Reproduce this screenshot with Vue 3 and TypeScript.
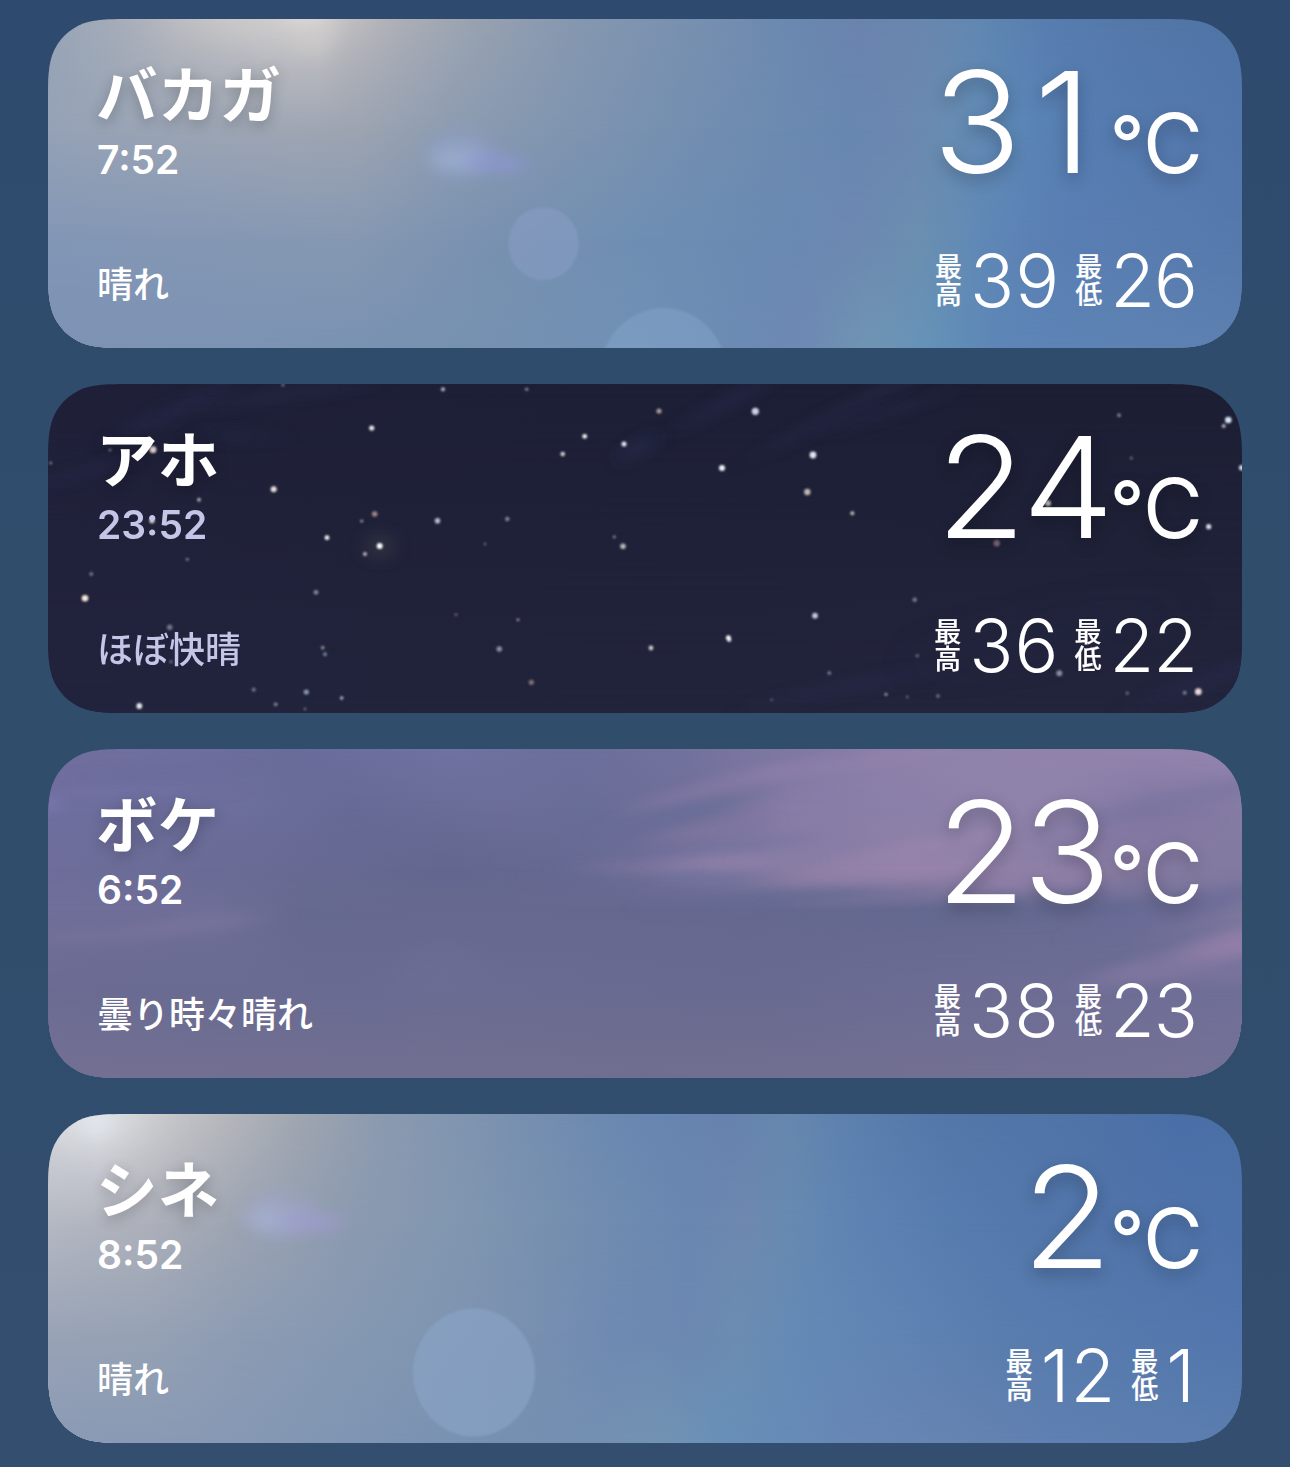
<script setup lang="ts">
interface Band {
  y: number
  stops: [number, string][]
}
interface Blob {
  cx: number
  cy: number
  rx: number
  ry: number
  rot?: number
  fill: string
  o: number
  blur: 'xs' | 's' | 'm' | 'c'
}
interface Place {
  id: string
  name: string
  time: string
  condition: string
  temp: string
  high: string
  low: string
  dim?: boolean
  bands: Band[]
  blobs: Blob[]
  stars?: boolean
}

const W = 1194
const H = 329

// Continuous-curvature rounded rectangle
function roundedShape(w: number, h: number, r: number): string {
  const a = 1.528665 * r
  const b = 1.088493 * r
  const c = 0.868407 * r
  const d = 0.631494 * r
  const e = 0.074911 * r
  const f = 0.372824 * r
  const g = 0.16906 * r
  return [
    `M${a} 0H${w - a}`,
    `C${w - b} 0 ${w - c} 0 ${w - d} ${e}`,
    `C${w - f} ${g} ${w - g} ${f} ${w - e} ${d}`,
    `C${w} ${c} ${w} ${b} ${w} ${a}`,
    `V${h - a}`,
    `C${w} ${h - b} ${w} ${h - c} ${w - e} ${h - d}`,
    `C${w - g} ${h - f} ${w - f} ${h - g} ${w - d} ${h - e}`,
    `C${w - c} ${h} ${w - b} ${h} ${w - a} ${h}`,
    `H${a}`,
    `C${b} ${h} ${c} ${h} ${d} ${h - e}`,
    `C${f} ${h - g} ${g} ${h - f} ${e} ${h - d}`,
    `C0 ${h - c} 0 ${h - b} 0 ${h - a}`,
    `V${a}`,
    `C0 ${b} 0 ${c} ${e} ${d}`,
    `C${g} ${f} ${f} ${g} ${d} ${e}`,
    `C${c} 0 ${b} 0 ${a} 0Z`,
  ].join('')
}
const shape = roundedShape(W, H, 57)

// x, y, radius, opacity, colour
const stars: [number, number, number, number, string][] = [
  [2.7, 79, 1.6, 0.4, '#fff'], [62, 66, 1.6, 0.4, '#fff'], [105, 65.7, 3.4, 0.95, '#f4e4df'],
  [151, 115.7, 2, 0.7, '#e4e4f0'], [225.7, 105.3, 3, 0.95, '#f3ece6'], [323.7, 44, 2.6, 0.95, '#f2f2f8'],
  [235, 1, 1.6, 0.4, '#fff'], [326.7, 130, 2.8, 0.75, '#c9a59d'], [313.7, 137, 1.6, 0.6, '#e4e4f0'],
  [389.5, 136.7, 2.8, 0.8, '#dfe3f2'], [279, 153.7, 2.4, 0.95, '#fff'], [331.7, 162, 3, 1, '#fff'],
  [317, 170, 2, 0.8, '#e8dcd8'], [139.3, 175.3, 1.6, 0.4, '#fff'], [43.3, 190, 1.9, 0.5, '#bcd0dc'],
  [37, 214.3, 3.3, 0.98, '#fbeedd'], [268, 208.3, 2.4, 0.6, '#c3cbe0'], [121.7, 243.3, 2.8, 0.6, '#9fb0bd'],
  [123, 277.7, 1.5, 0.4, '#fff'], [274.7, 263.7, 1.9, 0.6, '#d8c8c8'], [277, 270.3, 2, 0.6, '#a9c0d4'],
  [205.7, 305.7, 2.1, 0.55, '#9fb6c6'], [258.3, 308, 2.6, 0.7, '#b8cbe0'], [293.7, 314, 1.8, 0.75, '#dfe6f4'],
  [227.7, 320.3, 1.9, 0.6, '#d0c6c4'], [257, 325, 1.4, 0.35, '#fff'], [91.3, 322, 2.9, 0.95, '#eef2f8'],
  [104, 136.7, 2.6, 0.9, '#f4e4d8'], [395, 5.3, 2.1, 0.75, '#e0e0ec'], [478.7, 5.3, 1.8, 0.5, '#e0e0ec'],
  [611, 27, 2.6, 0.75, '#d8c4bc'], [707.3, 27.3, 3.6, 0.9, '#dfe3f8'], [536.7, 52.3, 2.4, 0.95, '#fff'],
  [576, 60, 2.5, 0.95, '#f2f4ff'], [514.7, 70, 2.3, 0.85, '#f0f0ec'], [765, 71, 3.4, 0.95, '#eceffc'],
  [674, 84, 3, 0.98, '#f4f6ff'], [759.3, 108, 3.2, 0.85, '#dad2c6'], [804.3, 129.3, 2, 0.8, '#ece4e0'],
  [459.3, 135, 2.2, 0.6, '#c4c8d8'], [437, 160, 1.4, 0.3, '#fff'], [566.3, 153, 1.4, 0.5, '#fff'],
  [575, 162.3, 2.8, 0.8, '#dcdcd4'], [408, 230.7, 1.6, 0.35, '#e8c8b0'], [470, 235.7, 1.5, 0.5, '#fff'],
  [451.3, 265, 2.8, 0.7, '#b8bccc'], [483.3, 298.3, 2.6, 0.6, '#c0a8a0'], [603, 264, 2.4, 0.85, '#f0e8e0'],
  [680.4, 253.8, 2.5, 0.95, '#fff'], [681.2, 255.8, 2.2, 0.8, '#fff'], [767, 231.7, 2.9, 0.9, '#d0dcf4'],
  [781.3, 289, 2, 0.5, '#b8c8d8'], [723.7, 315.7, 1.3, 0.3, '#fff'], [1071, 31.3, 2, 0.5, '#d8dce8'],
  [1180.3, 36, 3.3, 0.95, '#e0eef8'], [1175.7, 42, 2, 0.75, '#e0e4e8'], [1083.3, 74, 1.6, 0.35, '#fff'],
  [1193.7, 83.7, 2.8, 0.9, '#e8ecf8'], [1160.7, 142.7, 2.6, 0.9, '#f0f4ff'], [1000, 119.3, 3, 0.8, '#e4e8d8'],
  [948.7, 159.3, 3.2, 0.65, '#b09098'], [866.7, 215.7, 2.3, 0.6, '#b0b8c8'], [869.3, 271.7, 1.8, 0.4, '#b0d0d0'],
  [1011.3, 289.3, 3, 0.7, '#b4bcc8'], [838, 310.3, 1.6, 0.6, '#e8e0e8'], [859.3, 313, 1.4, 0.3, '#fff'],
  [890, 312, 1.9, 0.45, '#d0c8d8'], [1079.3, 309.3, 1.7, 0.4, '#d0d0d8'], [1136.7, 308.7, 2, 0.55, '#c0c8d0'],
  [1150.3, 307.7, 3.4, 0.95, '#f4e0e0'],
]

const places: Place[] = [
  {
    id: 'a',
    name: 'バカガ',
    time: '7:52',
    condition: '晴れ',
    temp: '31',
    high: '39',
    low: '26',
    bands: [
      { y: 0, stops: [[0, '#97a4b6'], [70, '#a6adb9'], [130, '#b9babf'], [220, '#c6c5c7'], [270, '#c9c7c7'], [300, '#bab9bd'], [350, '#adafb7'], [430, '#98a2b0'], [520, '#8798b0'], [650, '#7790b0'], [750, '#6a88b0'], [810, '#6a84ae'], [880, '#6a87ae'], [930, '#6088b2'], [1000, '#587db0'], [1100, '#5377a8'], [1194, '#4f74a6']] },
      { y: 110, stops: [[0, '#95a2b6'], [100, '#9aa4b5'], [250, '#9fa6b3'], [310, '#9da4b1'], [400, '#8d9cb1'], [500, '#8296b0'], [650, '#728eb0'], [800, '#6887b0'], [855, '#6c87b0'], [900, '#688cb1'], [960, '#5c87b6'], [1030, '#567db2'], [1194, '#5276aa']] },
      { y: 220, stops: [[0, '#8296b5'], [150, '#8497b4'], [300, '#8698b2'], [450, '#7891b0'], [600, '#6e8eb3'], [750, '#6a89b2'], [810, '#6d88b1'], [870, '#6b8fb0'], [930, '#6089b6'], [1000, '#5a7fb4'], [1194, '#5679ac']] },
      { y: 329, stops: [[0, '#7d92b5'], [200, '#7c93b3'], [400, '#7791b0'], [600, '#7090b5'], [700, '#6c8ab3'], [760, '#6f89b3'], [820, '#7095b3'], [880, '#6592b8'], [950, '#5d85b6'], [1194, '#5d80b0']] },
    ],
    blobs: [
      { cx: 225, cy: -6, rx: 90, ry: 28, fill: '#dcd8d6', o: 0.4, blur: 'm' },
      { cx: 262, cy: 4, rx: 26, ry: 34, rot: -14, fill: '#d6d2cf', o: 0.3, blur: 's' },
      { cx: 256, cy: -4, rx: 22, ry: 10, fill: '#e2e3e3', o: 0.4, blur: 's' },
      { cx: 412, cy: 136, rx: 34, ry: 24, fill: '#93a2d0', o: 0.45, blur: 's' },
      { cx: 410, cy: 140, rx: 24, ry: 11, fill: '#a0b5d3', o: 0.6, blur: 's' },
      { cx: 448, cy: 144, rx: 32, ry: 9, rot: 5, fill: '#8c95d3', o: 0.75, blur: 's' },
      { cx: 495.5, cy: 224.5, rx: 35.5, ry: 36.5, fill: '#8c9fc8', o: 0.5, blur: 'xs' },
      { cx: 615.5, cy: 354, rx: 63, ry: 65, fill: '#84a4cb', o: 0.5, blur: 'xs' },
    ],
  },
  {
    id: 'b',
    name: 'アホ',
    time: '23:52',
    condition: 'ほぼ快晴',
    temp: '24',
    high: '36',
    low: '22',
    dim: true,
    stars: true,
    bands: [
      { y: 0, stops: [[0, '#1f2038'], [600, '#1d1f36'], [1194, '#1c1e34']] },
      { y: 329, stops: [[0, '#22233d'], [600, '#22243b'], [1194, '#23253d']] },
    ],
    blobs: [
      { cx: 130, cy: 25, rx: 60, ry: 10, rot: -24, fill: '#2d2e52', o: 0.35, blur: 'c' },
      { cx: 230, cy: 12, rx: 90, ry: 7, rot: -8, fill: '#2a2b4c', o: 0.35, blur: 'c' },
      { cx: 190, cy: 52, rx: 22, ry: 8, fill: '#2b2c50', o: 0.35, blur: 'c' },
      { cx: 30, cy: 90, rx: 60, ry: 7, rot: -16, fill: '#2b2c50', o: 0.35, blur: 'c' },
      { cx: 590, cy: 64, rx: 24, ry: 7, rot: -28, fill: '#2c2d52', o: 0.6, blur: 's' },
      { cx: 680, cy: 18, rx: 50, ry: 9, rot: -28, fill: '#2b2c50', o: 0.4, blur: 'c' },
      { cx: 810, cy: 20, rx: 110, ry: 8, rot: -27, fill: '#292a4b', o: 0.4, blur: 'c' },
      { cx: 840, cy: 28, rx: 60, ry: 6, rot: -18, fill: '#2a2b4e', o: 0.4, blur: 'c' },
      { cx: 800, cy: 303, rx: 90, ry: 8, rot: -11, fill: '#2a2b4e', o: 0.35, blur: 'c' },
      { cx: 1000, cy: 250, rx: 130, ry: 12, rot: -12, fill: '#28294a', o: 0.35, blur: 'm' },
      { cx: 1160, cy: 295, rx: 70, ry: 10, rot: -20, fill: '#2c2c50', o: 0.35, blur: 'c' },
      { cx: 331.7, cy: 162, rx: 14, ry: 14, fill: '#484b4e', o: 0.35, blur: 's' },
    ],
  },
  {
    id: 'c',
    name: 'ボケ',
    time: '6:52',
    condition: '曇り時々晴れ',
    temp: '23',
    high: '38',
    low: '23',
    bands: [
      { y: 0, stops: [[0, '#716e9d'], [120, '#6f6f9f'], [240, '#696c9a'], [400, '#7072a2'], [520, '#6c6f9b'], [640, '#72729e'], [740, '#7f79a3'], [840, '#8e81aa'], [900, '#9083ac'], [1194, '#9484ae']] },
      { y: 60, stops: [[0, '#6f6fa0'], [200, '#6c6e9b'], [300, '#666a95'], [450, '#6b6e98'], [540, '#686d97'], [640, '#716f99'], [740, '#877ca6'], [1000, '#8f83ab'], [1100, '#8278a2'], [1194, '#857ca4']] },
      { y: 120, stops: [[0, '#6e6d9a'], [200, '#696b95'], [400, '#63678f'], [530, '#676a92'], [620, '#73709c'], [740, '#877da4'], [860, '#9683ab'], [960, '#8f80a8'], [1194, '#8179a0']] },
      { y: 160, stops: [[0, '#706f9a'], [170, '#6e6e97'], [260, '#66698f'], [600, '#666890'], [900, '#656990'], [1080, '#696b94'], [1194, '#7e789e']] },
      { y: 240, stops: [[0, '#6b6b92'], [300, '#696b92'], [380, '#6b6c92'], [700, '#696a90'], [1194, '#706f98']] },
      { y: 329, stops: [[0, '#737093'], [600, '#706e90'], [1194, '#747195']] },
    ],
    blobs: [
      { cx: 0, cy: 54, rx: 14, ry: 4, fill: '#9389c0', o: 0.7, blur: 's' },
      { cx: 80, cy: 42, rx: 90, ry: 6, fill: '#7774a8', o: 0.4, blur: 'c' },
      { cx: 110, cy: 22, rx: 70, ry: 4, rot: -3, fill: '#66699a', o: 0.4, blur: 'c' },
      { cx: 150, cy: 175, rx: 60, ry: 10, rot: -5, fill: '#7f78a0', o: 0.5, blur: 'c' },
      { cx: 50, cy: 187, rx: 80, ry: 10, rot: -3, fill: '#7a749d', o: 0.4, blur: 'c' },
      { cx: 395, cy: 225, rx: 40, ry: 25, fill: '#72749a', o: 0.3, blur: 'm' },
      { cx: 640, cy: 62, rx: 70, ry: 8, rot: -12, fill: '#676e98', o: 0.8, blur: 'c' },
      { cx: 690, cy: 31, rx: 110, ry: 7, rot: -15, fill: '#897da8', o: 0.6, blur: 'c' },
      { cx: 810, cy: 12, rx: 110, ry: 7, rot: -9, fill: '#9584ae', o: 0.45, blur: 'c' },
      { cx: 560, cy: 92, rx: 80, ry: 9, rot: -10, fill: '#676c96', o: 0.7, blur: 'c' },
      { cx: 650, cy: 83, rx: 50, ry: 7, rot: -8, fill: '#8479a3', o: 0.6, blur: 'c' },
      { cx: 700, cy: 95, rx: 80, ry: 5, rot: -6, fill: '#7575a0', o: 0.6, blur: 'c' },
      { cx: 670, cy: 114, rx: 70, ry: 7, rot: -3, fill: '#9584aa', o: 0.7, blur: 'c' },
      { cx: 575, cy: 119, rx: 40, ry: 6, fill: '#8278a0', o: 0.5, blur: 'c' },
      { cx: 530, cy: 128, rx: 30, ry: 7, fill: '#646b94', o: 0.5, blur: 'c' },
      { cx: 655, cy: 130, rx: 44, ry: 5, rot: 5, fill: '#7074a0', o: 0.8, blur: 'c' },
      { cx: 840, cy: 124, rx: 120, ry: 11, rot: -4, fill: '#9983aa', o: 0.5, blur: 'c' },
      { cx: 1000, cy: 130, rx: 100, ry: 12, rot: -5, fill: '#9682aa', o: 0.5, blur: 'c' },
      { cx: 880, cy: 97, rx: 90, ry: 6, rot: -10, fill: '#9c87ae', o: 0.45, blur: 'c' },
      { cx: 780, cy: 98, rx: 70, ry: 4, rot: -8, fill: '#827ba5', o: 0.6, blur: 'c' },
      { cx: 1130, cy: 52, rx: 120, ry: 11, rot: -13, fill: '#7874a0', o: 0.6, blur: 'c' },
      { cx: 1060, cy: 90, rx: 80, ry: 10, rot: -8, fill: '#8177a2', o: 0.5, blur: 'c' },
      { cx: 720, cy: 151, rx: 110, ry: 6, rot: -4, fill: '#646b93', o: 0.8, blur: 'c' },
      { cx: 830, cy: 151, rx: 90, ry: 3, rot: -3, fill: '#7f77a0', o: 0.5, blur: 'c' },
      { cx: 940, cy: 166, rx: 220, ry: 9, rot: -3, fill: '#636991', o: 0.75, blur: 'c' },
      { cx: 1140, cy: 158, rx: 100, ry: 12, rot: -14, fill: '#6b6b98', o: 0.65, blur: 'c' },
      { cx: 1160, cy: 207, rx: 130, ry: 14, rot: -13, fill: '#857aa2', o: 0.6, blur: 'c' },
      { cx: 1195, cy: 192, rx: 60, ry: 14, rot: -14, fill: '#9882ab', o: 0.65, blur: 'c' },
      { cx: 1150, cy: 224, rx: 90, ry: 8, fill: '#8278a2', o: 0.45, blur: 'c' },
    ],
  },
  {
    id: 'd',
    name: 'シネ',
    time: '8:52',
    condition: '晴れ',
    temp: '2',
    high: '12',
    low: '1',
    bands: [
      { y: 0, stops: [[0, '#d6d8dc'], [50, '#dcdee2'], [100, '#cdcdd0'], [170, '#b8b9be'], [250, '#a0a6b0'], [330, '#8c9bb0'], [450, '#7b92b0'], [560, '#6b89b1'], [620, '#6785b0'], [680, '#6782ae'], [740, '#6688ae'], [800, '#5d80af'], [900, '#5377a8'], [1050, '#4f73a7'], [1130, '#4a6fa8'], [1194, '#4b70a6']] },
      { y: 110, stops: [[0, '#b4b8c2'], [100, '#adb0ba'], [180, '#9ea5b2'], [300, '#8c9ab0'], [420, '#8096b0'], [540, '#728daf'], [640, '#6987b1'], [700, '#6e88af'], [740, '#678ab0'], [800, '#5f84b4'], [900, '#577cae'], [1050, '#5174aa'], [1194, '#4d72a9']] },
      { y: 220, stops: [[0, '#99a3b6'], [100, '#96a2b4'], [200, '#8c9bb3'], [350, '#8297b1'], [480, '#7990b0'], [560, '#6f8ab2'], [640, '#6c88b1'], [690, '#6c8db0'], [740, '#658ab5'], [850, '#6084b4'], [950, '#597dae'], [1194, '#5276ad']] },
      { y: 329, stops: [[0, '#8a9ab4'], [150, '#8899b4'], [300, '#7f95b3'], [450, '#7690b1'], [540, '#738fb1'], [610, '#7393b2'], [680, '#678fb8'], [800, '#6787b5'], [900, '#6783b1'], [1000, '#5f80b1'], [1194, '#5b7dae']] },
    ],
    blobs: [
      { cx: 42, cy: 4, rx: 50, ry: 26, fill: '#e2e4e8', o: 0.5, blur: 'm' },
      { cx: 48, cy: 10, rx: 18, ry: 14, fill: '#e2ebf4', o: 0.5, blur: 's' },
      { cx: 232, cy: 101, rx: 36, ry: 24, fill: '#a0a6d0', o: 0.4, blur: 's' },
      { cx: 222, cy: 105, rx: 24, ry: 11, fill: '#a8b4d2', o: 0.6, blur: 's' },
      { cx: 262, cy: 108, rx: 34, ry: 9, rot: 4, fill: '#9e9cd0', o: 0.7, blur: 's' },
      { cx: 426, cy: 258.5, rx: 61, ry: 64, fill: '#8ca6c9', o: 0.6, blur: 'xs' },
    ],
  },
]
</script>

<template>
  <main class="page">
    <section v-for="p in places" :key="p.id" class="card" :class="{ dim: p.dim }">
      <svg class="sky" :viewBox="`0 0 ${W} ${H}`" :width="W" :height="H" aria-hidden="true">
        <defs>
          <clipPath :id="`clip-${p.id}`"><path :d="shape" /></clipPath>
          <filter id="blur-xs" x="-10%" y="-10%" width="120%" height="120%"><feGaussianBlur stdDeviation="1.2" /></filter>
          <filter id="blur-s" x="-100%" y="-300%" width="300%" height="700%"><feGaussianBlur stdDeviation="9 7" /></filter>
          <filter id="blur-c" x="-150%" y="-300%" width="400%" height="700%"><feGaussianBlur stdDeviation="22 5.5" /></filter>
          <filter id="blur-m" x="-100%" y="-200%" width="300%" height="500%"><feGaussianBlur stdDeviation="26 18" /></filter>
          <filter id="blur-star" x="-50%" y="-50%" width="200%" height="200%"><feGaussianBlur stdDeviation="0.8" /></filter>
          <template v-for="(b, i) in p.bands" :key="i">
            <linearGradient :id="`band-${p.id}${i}`" gradientUnits="userSpaceOnUse" x1="0" y1="0" :x2="W" y2="0">
              <stop v-for="s in b.stops" :key="s[0]" :offset="s[0] / W" :stop-color="s[1]" />
            </linearGradient>
            <template v-if="i > 0">
              <linearGradient :id="`fade-${p.id}${i}`" gradientUnits="userSpaceOnUse" x1="0" :y1="p.bands[i - 1].y" x2="0" :y2="b.y">
                <stop offset="0" stop-color="#fff" stop-opacity="0" />
                <stop offset="1" stop-color="#fff" />
              </linearGradient>
              <mask :id="`mask-${p.id}${i}`" maskUnits="userSpaceOnUse" x="0" y="0" :width="W" :height="H">
                <rect :width="W" :height="H" :fill="`url(#fade-${p.id}${i})`" />
              </mask>
            </template>
          </template>
        </defs>
        <g :clip-path="`url(#clip-${p.id})`">
          <rect
            v-for="(b, i) in p.bands"
            :key="b.y"
            :width="W"
            :height="H"
            :fill="`url(#band-${p.id}${i})`"
            :mask="i > 0 ? `url(#mask-${p.id}${i})` : undefined"
          />
          <ellipse
            v-for="(o, i) in p.blobs"
            :key="i"
            :cx="o.cx"
            :cy="o.cy"
            :rx="o.rx"
            :ry="o.ry"
            :fill="o.fill"
            :opacity="o.o"
            :transform="o.rot ? `rotate(${o.rot} ${o.cx} ${o.cy})` : undefined"
            :filter="`url(#blur-${o.blur})`"
          />
          <g v-if="p.stars" filter="url(#blur-star)">
            <circle v-for="(s, i) in stars" :key="i" :cx="s[0]" :cy="s[1]" :r="s[2]" :opacity="s[3]" :fill="s[4]" />
          </g>
        </g>
      </svg>
      <div class="row top">
        <div class="place">
          <h2 class="name">{{ p.name }}</h2>
          <p class="time">{{ p.time }}</p>
        </div>
        <div class="temp">
          <span class="value"><span v-for="(d, i) in p.temp" :key="i" class="digit" :class="{ one: d === '1' }">{{ d }}</span></span>
          <span class="degree">°</span>
          <span class="unit">C</span>
        </div>
      </div>
      <div class="row bottom">
        <p class="condition">{{ p.condition }}</p>
        <div class="range">
          <span class="label"><span>最</span><span>高</span></span>
          <span class="num high">{{ p.high }}</span>
          <span class="label second"><span>最</span><span>低</span></span>
          <span class="num" :class="{ one: p.low.endsWith('1') }">{{ p.low }}</span>
        </div>
      </div>
    </section>
  </main>
</template>

<style>
body {
  background: #304c6d;
}
</style>

<style scoped>
.page {
  box-sizing: border-box;
  width: 1290px;
  height: 1467px;
  padding: 19px 48px 0;
  display: flex;
  flex-direction: column;
  gap: 36px;
  overflow: hidden;
  background: linear-gradient(#2e4a6e, #304d6c 40%, #304d6c 60%, #344e70);
  color: #fff;
  font-family: Inter, 'Noto Sans CJK JP', sans-serif;
}
.card {
  position: relative;
  box-sizing: border-box;
  flex: none;
  width: 1194px;
  height: 329px;
  padding: 35px 42px 0 49px;
  display: flex;
  flex-direction: column;
}
.sky {
  position: absolute;
  inset: 0;
  display: block;
}
.row {
  position: relative;
  display: flex;
  justify-content: space-between;
  align-items: flex-start;
}
.top {
  height: 191px;
}
.name {
  margin: 0 0 0 -1px;
  font: 700 61.5px/76px 'Noto Sans CJK JP', sans-serif;
  letter-spacing: 0.3px;
  text-shadow: 0 4px 14px rgba(0, 0, 0, 0.24);
}
.time {
  margin: 6px 0 0;
  font-size: 39px;
  line-height: 48px;
  font-weight: 600;
}
.temp {
  display: flex;
  align-items: baseline;
  margin: 1px -3px 0 0;
  text-shadow: 0 6px 16px rgba(0, 0, 0, 0.24);
}
.value {
  display: flex;
  font-size: 140.5px;
  line-height: 134px;
  font-weight: 310;
}
.digit {
  width: 86px;
  text-align: center;
  transform: scaleX(1.04);
}
.digit.one {
  padding-right: 4px;
}
.degree {
  position: relative;
  top: -3px;
  width: 33px;
  text-align: center;
  font-size: 75px;
  line-height: 100px;
  font-weight: 500;
}
.unit {
  font-size: 82px;
  line-height: 100px;
  font-weight: 400;
}
.condition {
  margin: 11px 0 0;
  font: 500 36px/52px 'Noto Sans CJK JP', sans-serif;
}
.dim .time,
.dim .condition {
  color: #c5c5e8;
}
.range {
  display: flex;
  align-items: center;
  margin: 1px 3px 0 0;
}
.label {
  display: flex;
  flex-direction: column;
  margin: -4px 8px 0 0;
  font: 500 27px/27px 'Noto Sans CJK JP', sans-serif;
  -webkit-text-stroke: 0.2px currentColor;
}
.second {
  margin-left: 17px;
}
.num {
  font-size: 73px;
  line-height: 70px;
  font-weight: 270;
  letter-spacing: -1px;
}
.num.high {
  letter-spacing: 1px;
  margin-right: -2px;
}
.num.one {
  padding-right: 3px;
}
</style>
